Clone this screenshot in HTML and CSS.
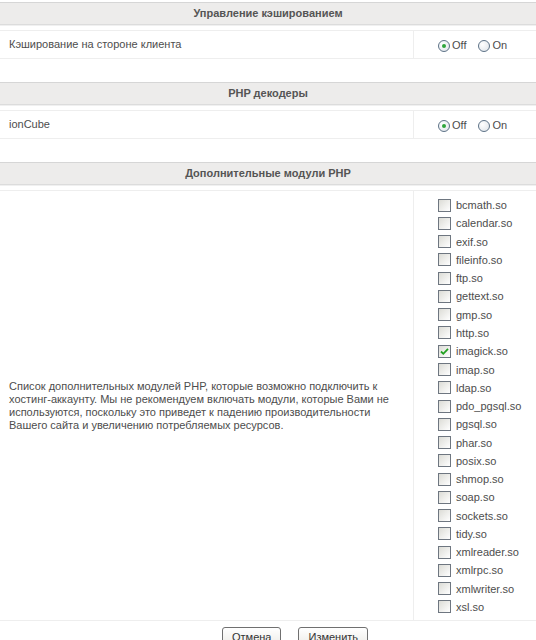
FILE: index.html
```html
<!DOCTYPE html>
<html>

<head>
  <meta charset="utf-8">
  <link rel="stylesheet" href="styles.css">
</head>

<body>
  <form class="settings">
    <div class="section-head">Управление кэшированием</div>
    <div class="row">
      <div class="row-name">Кэширование на стороне клиента</div>
      <div class="row-value">
        <label class="radio"><span class="dot checked"></span>Off</label>
        <label class="radio"><span class="dot"></span>On</label>
      </div>
    </div>

    <div class="section-head">PHP декодеры</div>
    <div class="row">
      <div class="row-name">ionCube</div>
      <div class="row-value">
        <label class="radio"><span class="dot checked"></span>Off</label>
        <label class="radio"><span class="dot"></span>On</label>
      </div>
    </div>

    <div class="section-head">Дополнительные модули PHP</div>
    <div class="row row-modules">
      <div class="row-name desc">
        Список дополнительных модулей PHP, которые возможно подключить к
        хостинг-аккаунту. Мы не рекомендуем включать модули, которые Вами не
        используются, поскольку это приведет к падению производительности
        Вашего сайта и увеличению потребляемых ресурсов.
      </div>
      <div class="row-value modules">
        <label class="check"><span class="box"></span>bcmath.so</label>
        <label class="check"><span class="box"></span>calendar.so</label>
        <label class="check"><span class="box"></span>exif.so</label>
        <label class="check"><span class="box"></span>fileinfo.so</label>
        <label class="check"><span class="box"></span>ftp.so</label>
        <label class="check"><span class="box"></span>gettext.so</label>
        <label class="check"><span class="box"></span>gmp.so</label>
        <label class="check"><span class="box"></span>http.so</label>
        <label class="check"><span class="box checked"><svg viewBox="0 0 11 11" width="11" height="11"><path d="M2 5.5 L4.3 7.8 L9 2.8" fill="none" stroke="#21a121" stroke-width="1.8"/></svg></span>imagick.so</label>
        <label class="check"><span class="box"></span>imap.so</label>
        <label class="check"><span class="box"></span>ldap.so</label>
        <label class="check"><span class="box"></span>pdo_pgsql.so</label>
        <label class="check"><span class="box"></span>pgsql.so</label>
        <label class="check"><span class="box"></span>phar.so</label>
        <label class="check"><span class="box"></span>posix.so</label>
        <label class="check"><span class="box"></span>shmop.so</label>
        <label class="check"><span class="box"></span>soap.so</label>
        <label class="check"><span class="box"></span>sockets.so</label>
        <label class="check"><span class="box"></span>tidy.so</label>
        <label class="check"><span class="box"></span>xmlreader.so</label>
        <label class="check"><span class="box"></span>xmlrpc.so</label>
        <label class="check"><span class="box"></span>xmlwriter.so</label>
        <label class="check"><span class="box"></span>xsl.so</label>
      </div>
    </div>

    <div class="buttons">
      <button type="button">Отмена</button>
      <button type="submit">Изменить</button>
    </div>
  </form>
</body>

</html>
```

FILE: styles.css
```css
body {
  margin: 0;
  background: white;
  font-family: 'Liberation Sans', Arial, sans-serif;
  font-size: 11px;
  color: #4d4d4d;
}

.settings {
  padding-top: 2px;
}

.section-head {
  height: 21px;
  line-height: 21px;
  border-top: 1px solid #d6d6d6;
  border-bottom: 1px solid #dcdcdc;
  box-shadow: 0 1px 0 #f0f0f0;
  background: #edeceb;
  text-align: center;
  font-weight: bold;
  color: #555;
}

.row {
  display: flex;
  margin-top: 5px;
  margin-bottom: 23px;
  border-top: 1px solid #eeeeee;
  border-bottom: 1px solid #eeeeee;
}

.row-name {
  flex: 0 0 404px;
  padding: 7px 0 7px 9px;
  line-height: 13px;
  border-right: 1px solid #eeeeee;
}

.row-value {
  flex: 1;
  display: flex;
  align-items: center;
  padding-left: 24px;
}

.radio {
  display: flex;
  align-items: center;
  margin-right: 12px;
}

.dot {
  box-sizing: border-box;
  width: 12px;
  height: 12px;
  margin: 3px 2px 0 0;
  border: 1px solid #5d7287;
  border-radius: 50%;
  background: radial-gradient(circle at 35% 35%, #ffffff, #dde3e8);
  position: relative;
}

.dot.checked::after {
  content: '';
  position: absolute;
  left: 3px;
  top: 3px;
  width: 4px;
  height: 4px;
  border-radius: 50%;
  background: #2fa53c;
}

.row-modules {
  margin-bottom: 6px;
}

.row-modules .row-name {
  display: flex;
  align-items: center;
  padding: 4px 18px 4px 9px;
  flex-basis: 386px;
}

.modules {
  flex-direction: column;
  align-items: flex-start;
  padding-top: 5px;
  padding-bottom: 4px;
}

.check {
  display: flex;
  align-items: center;
  height: 18.28px;
}

.box {
  box-sizing: border-box;
  width: 13px;
  height: 13px;
  margin-right: 5px;
  border: 1px solid #6e7680;
  background: linear-gradient(135deg, #dcdcd6, #ffffff);
  display: flex;
  align-items: center;
  justify-content: center;
}

.buttons {
  display: flex;
  gap: 17px;
  padding-left: 222px;
}

.buttons button {
  height: 20px;
  padding: 0 9px;
  font-family: 'Liberation Sans', Arial, sans-serif;
  font-size: 11px;
  color: #333;
  border: 1px solid #707070;
  border-radius: 3px;
  background: linear-gradient(#ffffff, #ecebe6);
}
```
